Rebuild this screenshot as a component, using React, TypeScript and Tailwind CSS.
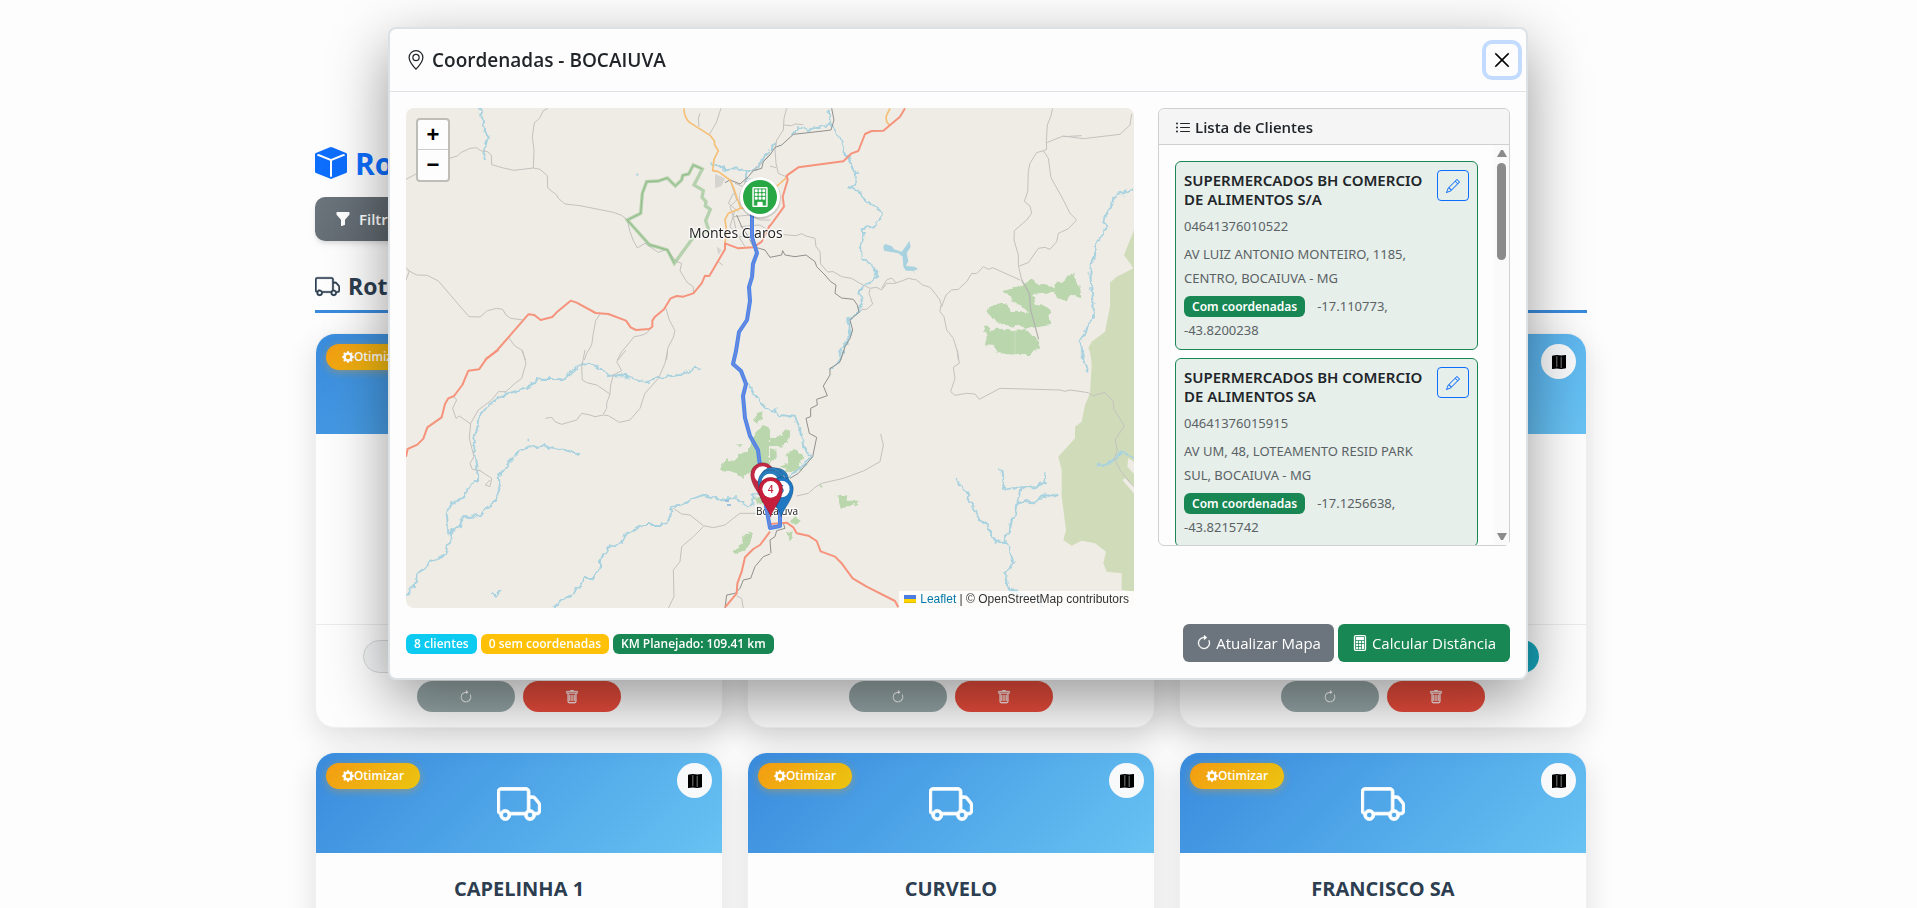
import type { ReactNode } from "react";
import {
  BsArrowClockwise,
  BsBoxFill,
  BsBuilding,
  BsCalculator,
  BsFunnelFill,
  BsGearFill,
  BsGeoAlt,
  BsListUl,
  BsMapFill,
  BsPencil,
  BsTrash,
  BsTruck,
  BsXLg,
} from "react-icons/bs";

const firstRow = ["ARAÇUAI", "BOCAIUVA", "BRASILIA DE MINAS"];
const secondRow = ["CAPELINHA 1", "CURVELO", "FRANCISCO SA"];

const clients = [
  {
    name: "SUPERMERCADOS BH COMERCIO DE ALIMENTOS S/A",
    doc: "04641376010522",
    address: "AV LUIZ ANTONIO MONTEIRO, 1185, CENTRO, BOCAIUVA - MG",
    coords: "-17.110773, -43.8200238",
  },
  {
    name: "SUPERMERCADOS BH COMERCIO DE ALIMENTOS SA",
    doc: "04641376015915",
    address: "AV UM, 48, LOTEAMENTO RESID PARK SUL, BOCAIUVA - MG",
    coords: "-17.1256638, -43.8215742",
  },
];

type Tile = {
  transform: string;
  roads: string;
  rails?: string;
  orange?: string;
  red: string;
  rivers: string;
  woods?: string;
  park?: string;
};

// each tile is drawn at 3x and scaled down into the map
const tiles: Tile[] = [
  {
    transform: "translate(-6 -8) scale(0.33333)",
    roads:
      "M18 238L48 222M148 175L172 168 182 158 210 145 230 143 242 152 262 155 274 165 275 194 310 204 342 211 400 204 402 150 397 110 403 68 418 56 430 32 443 25M400 204L420 208 442 227 443 264 470 285 475 295 495 312 540 317 595 328 640 337 665 346 682 360 690 395 700 422 712 444 735 430 775 457 800 448 828 484 845 490 840 512 862 548 880 560 880 578M18 540L28 513 18 503M22 510L50 525 82 526 115 543 207 650 240 651 262 632 290 625 308 628 318 645 332 655 370 660M325 712L345 738 365 750 377 780M600 643L587 662 580 700 575 735 560 760 553 780M798 625L808 660 825 692 820 712 803 745 800 780M748 690Q740 706 702 710L680 738 665 755 652 780M963 25L948 70 928 103M900 40L895 55 897 80M955 485L968 496M990 240L1010 300 990 320 1000 350 1050 345 1080 360 1110 360M1040 235L1030 260 1005 250M1000 350L1010 400 1035 440M1060 210L1085 190 1110 160M1005 330L990 380 1020 410 1050 410M1000 280L985 310 1015 335M1020 380L1080 375 1110 395",
    rails: "M975 248L990 240 1020 252 1045 230 1060 212 1085 205 1090 185 1110 165M1010 345L1025 380 1045 410 1060 440 1095 450 1110 472",
    orange:
      "M852 25Q852 55 870 68L930 106 943 122 944 135 955 152 942 178 938 212 955 215 990 240 1000 262 1022 325 985 340 975 358 980 395 975 430M1022 325L1060 320",
    red: "M1110 375L1085 425 1060 442 1015 445 975 430 975 448 928 528 915 527 905 550 880 580 850 590 830 588 812 595 792 628 765 650 757 662 757 680 748 687 708 690 692 682 678 662 625 642 587 639 530 608 512 602 470 637 457 651 422 660 403 645 385 643 340 695 292 750 255 780",
    rivers:
      "M240 25L245 50 250 68 252 92 265 107 258 135 250 160 255 180M925 190L955 196 975 208 1010 205 1040 212 1075 204 1085 180 1110 152M1040 212L1035 240 1050 245",
  },
  {
    transform: "translate(364 -8) scale(0.33333)",
    roads:
      "M50 25L42 55 40 90 20 120 15 150 18 190 25 220 48 230M0 198L18 203M40 75L65 77 75 72 100 74M40 404L78 407 95 401 108 408 135 415 138 440 150 455 152 492 173 516 190 515 215 530 245 535 270 550 300 565 320 562 335 570 350 550 375 550 395 543 415 535 440 540 458 555 480 562 495 580 510 600 515 620 528 585 545 570 565 568 590 545 605 520 620 521 640 500 655 508 668 503 750 540M300 568L297 580 308 612 290 628 275 628M335 565L350 540 365 534 378 548M512 618L510 635 522 650 530 690 550 715 562 755 565 780M848 25L842 50 832 75 829 125 830 148 820 152 800 158 780 190 775 215 773 275 763 304 780 318 785 340 770 360 733 392 732 420 745 465 745 495 755 540M820 152L835 175 843 233 880 300 900 340 920 360 895 386 865 400 860 425 840 448 825 442 805 445 775 488 748 498M830 128L880 108 940 116 1050 103 1080 75 1085 42M880 110L935 107",
    rails:
      "M185 25L192 60 183 90 160 93 70 103 35 135 15 142 0 165M0 472L35 465 38 452 45 465 75 470 108 465 135 485 140 500 165 525 182 545 198 555 195 580 215 594 250 598 262 615 267 637 240 660 248 690 240 715 225 740 212 780",
    orange: "M360 25L348 50 350 65 358 75M0 270L25 255 50 232",
    red: "M405 25L390 50 340 92 305 93 285 102 265 153 245 160 220 184 85 202 50 227 53 240 38 290 42 320 0 378",
    rivers:
      "M175 25L178 50 180 70 135 85 115 90 85 82 65 105M0 150L15 130M180 70L195 100 218 125 220 155 235 175 245 190 258 220 255 255 238 262 268 275 285 300 325 325 338 348 315 378 278 385 280 415 270 435 272 475 300 490 322 515 310 545 280 560 265 580 280 610 262 640 235 658 240 690 238 715 215 750 210 780M1090 265L1060 280 1045 280 1030 295 1025 320 1005 345 1000 370 1012 380 975 435 975 470 962 495 962 550 970 600 972 655 950 675 945 700 932 720 940 780",
    woods:
      "M700 574L765 552 785 535 800 550 850 562 855 545 880 545 910 518 918 550 930 560 936 592 905 588 890 600 865 600 853 575 790 582 797 615 825 617 848 630 835 650 842 675 770 686 740 672 715 680 670 657 652 642 655 625 690 607 712 618 725 632 778 635 740 610ZM642 675L658 682 655 695 685 684 705 695 740 688 765 690 798 712 808 748 785 762 680 760 672 738 645 735 650 710Z",
    park: "M1092 390L1062 465 1090 505 1040 530 1020 548 1020 620 1005 695 965 725 955 745 970 780 1092 780Z",
  },
  {
    transform: "translate(-6 242) scale(0.33333)",
    roads:
      "M367 0L378 40 365 85 345 100 318 125 295 125 275 150 235 180 212 220 208 265 222 320 210 340 217 358 240 362 275 385 270 410 256 405 270 390M160 138L170 150 158 175 168 205 178 198 212 222M555 0L545 50 547 90 560 98 590 105 630 132 620 160 620 175 610 192M678 0L650 35 665 62 640 75 632 105 630 132M803 0L795 40 775 85 735 130 720 175 690 210 658 217 625 197 610 195 585 200 570 195 545 190 530 210 485 223 465 215 455 202 436 205M820 475L845 492 870 495 910 527 940 533 975 525 1000 505 1020 490 1110 490M910 530L880 560 845 590 840 635 820 660 822 740 805 775M1010 738L1025 745 1030 775",
    rails: "M1110 612L1090 620 1065 650 1052 685 1030 690 1020 715 1005 730 980 735 975 775",
    red: "M295 0L260 25 237 58 205 62 187 105 162 138 145 145 135 162 125 202 82 232 70 266 52 284 23 297 18 320M1110 545L1080 585 1060 597 1035 622 1025 665 1012 700 1010 730 975 772",
    rivers:
      "M905 58L885 53 840 75 780 83 740 97 710 88 660 75 625 78 590 48 545 42 520 62 490 88 420 86 380 115 315 133 265 165 235 205 230 240 220 265 228 330 235 360 234 390 215 400 190 440 150 465 140 490 145 545 155 570 130 618 95 630 75 655 50 670 48 700 18 737M540 312L505 303 470 295 425 287 360 298 350 315 330 335 295 375 300 410 288 450 265 465 240 498 190 502 178 530 148 545M465 772L480 752 510 738 540 710 555 683 580 685 600 650 600 630 630 590 660 580 675 555 730 525 795 525 810 505 815 475 850 465 885 443 910 435 950 445 1010 445 1040 470 1060 460 1060 430 1085 430M275 728L290 742M290 735L306 717M380 265L386 270M1045 105L1060 125 1080 155 1110 180",
    woods:
      "M957 355L980 325 990 340 1020 310 1045 305 1060 265 1085 225 1110 235 1110 340 1060 360 1030 383 1010 372 965 362ZM1062 205L1085 182 1090 205 1070 218ZM1005 285L1028 282 1020 295ZM995 605L1020 590 1035 560 1050 543 1055 570 1030 605 1005 615ZM1060 450L1080 440 1110 455 1095 470Z",
  },
  {
    transform: "translate(364 242) scale(0.33333)",
    roads:
      "M562 0L568 40 550 52 555 85 542 125 555 136 590 130 615 132 628 148 690 115 870 120 885 124 900 120 955 128 968 138 1005 127 1030 155 1032 178 1063 228 1035 270 1042 300 1033 325 1050 360 1092 412M332 252L340 285 330 335 280 363 220 385 155 400 135 412 115 430 80 438",
    rails:
      "M222 0L210 35 190 50 180 55 180 75 160 108 172 137 140 148 142 165 122 175 122 200 108 205 118 250 140 262 128 320 85 370 60 385M40 520L45 535 20 542 15 560 0 570 3 610",
    red: "M0 522L50 518 70 532 80 550 115 557 140 573 152 604 195 620 215 640 248 685 290 710 375 753 385 772",
    rivers:
      "M222 0L205 40 175 58M0 180L20 182 30 195 75 200 90 235 100 290 125 320 90 355 55 385M935 0L945 40 953 65M688 352L698 365 702 417 730 415 755 412 800 412 810 402 825 400 830 365M755 412L748 450 738 470 735 490 725 505 720 540 705 560 708 580 675 575 650 525 628 510 590 430 555 382M745 453L785 460 830 432 845 440 868 434M708 580L720 605 732 638 708 665 710 690 718 720 745 722M720 722L790 745 825 772M980 343L998 348 1030 332 1055 308 1092 322",
    woods:
      "M0 265L35 260 35 245 60 242 60 265 35 290 0 285ZM0 295L20 300 20 335 0 340ZM52 310L80 300 105 325 85 350 95 362 60 365 25 350 55 340ZM202 437L235 435 233 452 262 452 260 465 215 472 205 460ZM680 0L805 0 770 10 710 10ZM60 515L75 495 90 512 80 525ZM50 545L65 550 60 572ZM150 402L158 402 156 412Z",
    park: "M960 0L965 45 960 130 945 165 935 215 915 230 915 265 865 320 875 360 875 440 888 540 880 570 905 587 935 572 975 580 1008 605 1000 640 1010 665 1055 670 1055 720 1092 725 1092 430 1058 390 1092 412 1092 0Z",
  },
];

const routePath =
  "M346 100L346 129 351 145 347 156 346 169 343 179 344 193 341 212 333 224 330 243 327 256 335 263 340 276 337 288 339 310 344 328 352 342 354 358M360 398L364 420 374 418 374 400";

function Pin({ x, y, color, label }: { x: number; y: number; color: string; label?: string }) {
  return (
    <g transform={`translate(${x} ${y})`}>
      <path
        d="M0 84C-5 60-36 32-36 0A36 36 0 1 1 36 0C36 32 5 60 0 84Z"
        fill={color}
        stroke="#000"
        strokeOpacity="0.25"
        strokeWidth="2"
      />
      <circle r="25" fill="#fff" />
      {label && (
        <text y="11" textAnchor="middle" fontSize="30" fontWeight="600" fill={color}>
          {label}
        </text>
      )}
    </g>
  );
}

function RouteMap() {
  return (
    <svg
      viewBox="0 0 728 500"
      preserveAspectRatio="xMidYMid slice"
      className="block h-full w-full bg-[#efece5] font-['Open_Sans','Noto_Sans',sans-serif]"
      role="img"
      aria-label="Mapa da rota"
    >
      <defs>
        <filter id="meander" filterUnits="userSpaceOnUse" x="0" y="0" width="1110" height="810">
          <feTurbulence type="fractalNoise" baseFrequency="0.05" numOctaves="2" seed="4" />
          <feDisplacementMap in="SourceGraphic" scale="20" xChannelSelector="R" yChannelSelector="G" />
        </filter>
      </defs>

      {tiles.map((tile) => (
        <g key={tile.transform} transform={tile.transform} fill="none" strokeLinejoin="round">
          {tile.park && <path d={tile.park} fill="#d0dcb9" />}
          {tile.woods && <path d={tile.woods} fill="#b9d6ad" filter="url(#meander)" />}
          <path d={tile.rivers} stroke="#a8d2df" strokeWidth="6" filter="url(#meander)" />
          <path d={tile.roads} stroke="#c2c1be" strokeWidth="3" />
          {tile.rails && <path d={tile.rails} stroke="#8f8f8d" strokeWidth="3" />}
          {tile.orange && <path d={tile.orange} stroke="#f5bf76" strokeWidth="5" />}
          <path d={tile.red} stroke="#f5937c" strokeWidth="6" />
        </g>
      ))}

      <g transform="translate(-6 -8) scale(0.33333)">
        <path d="M945 222L975 235 965 258 945 265ZM950 440L965 450 955 465Z" fill="#d5d4d1" />
        <path
          d="M682 360L722 340 727 280 740 245 775 243 802 234 826 258 845 240 848 226 866 222 880 195 907 207 882 255 910 272 906 292 918 305 916 318 931 328 917 362 926 390 878 415 823 490 802 450 748 434Z"
          fill="none"
          stroke="#8fc087"
          strokeOpacity="0.6"
          strokeWidth="10"
        />
        <path
          d="M682 360L722 340 727 280 740 245 775 243 802 234 826 258 845 240 848 226 866 222 880 195 907 207M682 360L748 434 802 450 823 490"
          fill="none"
          stroke="#8abb82"
          strokeWidth="3"
        />
        <path d="M706 224L716 220 714 228Z" fill="#a8d2df" />
      </g>
      <g transform="translate(364 -8) scale(0.33333)">
        <path
          d="M340 440L345 432 365 438 372 448 395 455 408 438 418 422 422 440 410 460 415 482 408 498 435 500 444 508 430 512 438 525 428 512 408 512 400 500 398 470 385 460 342 452Z"
          fill="#a8d2df"
        />
        <path d="M755 540L778 580 782 630 806 718" fill="none" stroke="#b3b5b0" strokeWidth="4" />
        <path d="M735 690L735 760" fill="none" stroke="#d6dfcb" strokeWidth="2" />
      </g>
      <g transform="translate(364 242) scale(0.33333)">
        <path d="M1075 325L1092 335 1092 372 1072 350ZM1058 390L1092 430 1092 412 1065 385Z" fill="#efece5" />
      </g>
      <path d="M319 393h4M321 397h4" stroke="#4a97dc" strokeWidth="1" />

      <g fill="#222" stroke="#fff" strokeWidth="3" strokeOpacity="0.7" paintOrder="stroke">
        <text x="283" y="130" fontSize="14">
          Montes Claros
        </text>
        <text x="350" y="407" fontSize="10">
          Bocaiúva
        </text>
      </g>

      <g fill="none" strokeLinejoin="round" strokeLinecap="round">
        <path d={routePath} stroke="#4484f0" strokeWidth="4" />
        <path d={routePath} stroke="#6a88da" strokeWidth="2" />
      </g>

      <circle cx="354" cy="90" r="21" fill="#000" fillOpacity="0.15" />
      <circle cx="354" cy="89" r="20" fill="#fff" />
      <circle cx="354" cy="89" r="17" fill="#28a745" />
      <BsBuilding x="344" y="79" size={20} color="#fff" strokeWidth="0.3" />

      <g transform="translate(314 332) scale(0.33333)">
        <Pin x={128} y={104} color="#c02a44" />
        <Pin x={170} y={120} color="#2a7dbd" />
        <Pin x={156} y={118} color="#2a7dbd" />
        <Pin x={150} y={126} color="#2a7dbd" />
        <Pin x={184} y={147} color="#1f78c1" label="5" />
        <Pin x={152} y={148} color="#c51f3b" label="4" />
      </g>
    </svg>
  );
}

function MapPanel() {
  return (
    <div className="relative col-span-2 h-[500px] overflow-hidden rounded-lg">
      <RouteMap />
      <div className="absolute top-2.5 left-2.5 flex w-[34px] flex-col rounded border-2 border-[#bfbdb8] bg-[#fdfdfd] font-['Liberation_Sans',Arial,sans-serif] text-[22px] font-bold text-black">
        <button type="button" aria-label="Aumentar zoom" className="h-[30px] border-b border-[#ccc] leading-[30px]">
          +
        </button>
        <button type="button" aria-label="Diminuir zoom" className="h-[30px] leading-[30px]">
          −
        </button>
      </div>
      <p className="absolute right-0 bottom-0 flex h-[17px] items-center bg-white/80 px-[5px] pb-px font-['Liberation_Sans',Arial,sans-serif] text-xs whitespace-pre text-[#333]">
        <svg className="mr-1 h-2 w-3" viewBox="0 0 12 8" aria-hidden="true">
          <path fill="#4C7BE1" d="M0 0h12v4H0z" />
          <path fill="#FFD500" d="M0 4h12v3H0z" />
          <path fill="#E0BC00" d="M0 7h12v1H0z" />
        </svg>
        <a href="#leaflet" className="text-[#0078a8]">
          Leaflet
        </a>
        {" | © OpenStreetMap contributors"}
      </p>
    </div>
  );
}

function ClientList() {
  return (
    <div className="self-start rounded-md border border-[#cfd0d1]">
      <h6 className="flex h-9 items-center gap-1 rounded-t-md border-b border-[#cfd0d1] bg-[#f5f5f5] px-4 pt-0.5 text-[15px] font-semibold text-[#212529]">
        <BsListUl className="h-4 w-4" />
        Lista de Clientes
      </h6>
      <div className="flex h-[400px] overflow-hidden">
        <div className="flex min-w-0 flex-1 flex-col gap-2 p-4">
          {clients.map((client) => (
            <article
              key={client.doc}
              className="flex h-[189px] shrink-0 items-start justify-between rounded-md border border-[#198754] bg-[#e6efea] p-2 font-['Noto_Sans','Open_Sans',sans-serif] text-[13px] leading-6 text-[#5b6266]"
            >
              <div className="min-w-0 flex-1">
                <h6 className="mt-px mb-[5px] text-[15px] leading-[19px] font-semibold text-[#212529]">{client.name}</h6>
                <p className="mb-1">{client.doc}</p>
                <p>{client.address}</p>
                <p className="pt-1">
                  <span className="mr-3 inline-block rounded-md bg-[#198754] px-2 text-xs leading-[21px] font-semibold text-white">
                    Com coordenadas
                  </span>
                  {client.coords}
                </p>
              </div>
              <button
                type="button"
                aria-label="Editar"
                className="flex h-[31px] w-8 shrink-0 items-center justify-center rounded border border-[#0d6efd] text-[#0d6efd]"
              >
                <BsPencil className="h-3.5 w-3.5" />
              </button>
            </article>
          ))}
        </div>
        <div className="flex w-[15px] flex-col items-center bg-[#fafafa] py-1">
          <svg viewBox="0 0 10 8" className="h-2 w-2.5" aria-hidden="true">
            <path d="M4 1h2l4 7H0z" fill="#8b8b8b" />
          </svg>
          <div className="mt-1.5 h-[97px] w-[9px] rounded-full bg-[#8b8b8b]" />
          <svg viewBox="0 0 10 8" className="mt-auto h-2 w-2.5" aria-hidden="true">
            <path d="M4 7h2l4-7H0z" fill="#8b8b8b" />
          </svg>
        </div>
      </div>
    </div>
  );
}

function RouteCard({ name, children }: { name: string; children?: ReactNode }) {
  return (
    <article className="flex h-[395px] flex-col overflow-hidden rounded-[20px] border border-black/5 bg-[#fdfdfd] shadow-[0_10px_30px_rgba(0,0,0,0.12)]">
      <div className="relative flex h-[100px] shrink-0 items-center justify-center bg-linear-135 from-[#398bdd] to-[#68c2f2] text-white">
        <button
          type="button"
          className="absolute top-2.5 left-2.5 flex h-[26px] w-[94px] items-center justify-center rounded-full bg-linear-135 from-[#f39c12] to-[#ebc40f] text-xs font-semibold shadow-[0_2px_8px_rgba(243,156,18,0.4)]"
        >
          <BsGearFill className="h-3 w-3" />
          Otimizar
        </button>
        <BsTruck className="mt-0.5 h-11 w-11" strokeWidth="0.3" />
        <button
          type="button"
          aria-label={`Mapa de ${name}`}
          className="absolute top-2.5 right-2.5 flex h-[35px] w-[35px] items-center justify-center rounded-full bg-[#f8f9fa] text-black"
        >
          <BsMapFill className="h-3.5 w-3.5" strokeWidth="0.5" />
        </button>
      </div>
      <h5 className="flex-1 pt-6 text-center text-xl leading-6 font-bold text-[#2c3e50]">{name}</h5>
      {children}
    </article>
  );
}

function CardActions() {
  return (
    <div className="border-t border-[#e9ecef] px-[47px] pt-[15px] pb-[15px]">
      <div className="flex h-[33px] gap-2">
        <button type="button" aria-label="Detalhes" className="flex-1 rounded-full border border-[#d5d8da] bg-[#f3f4f5]" />
        <button type="button" aria-label="Clientes" className="flex-1 rounded-full bg-[#3498db]" />
        <button type="button" aria-label="Coordenadas" className="flex-1 rounded-full bg-[#17a2b8]" />
      </div>
      <div className="mt-2 flex h-[31px] justify-center gap-2 text-white">
        <button
          type="button"
          aria-label="Atualizar"
          className="flex w-[98px] items-center justify-center rounded-full bg-[#95a5a6]"
        >
          <BsArrowClockwise className="h-3.5 w-3.5" />
        </button>
        <button
          type="button"
          aria-label="Excluir"
          className="flex w-[98px] items-center justify-center rounded-full bg-[#e74c3c]"
        >
          <BsTrash className="h-3.5 w-3.5" strokeWidth="0.3" />
        </button>
      </div>
    </div>
  );
}

function CoordinatesModal() {
  return (
    <div className="fixed inset-0 flex items-start justify-center pr-px">
      <section
        role="dialog"
        aria-labelledby="modal-title"
        className="mt-[27px] w-full max-w-[1140px] rounded-lg border-2 border-[#dce1e5] bg-[#fdfdfd] shadow-[0_20px_60px_rgba(0,0,0,0.4)]"
      >
        <header className="flex items-center justify-between border-b border-[#dee2e6] py-[15px] pr-2 pl-4">
          <h5 id="modal-title" className="flex items-center gap-1.5 text-[19px] leading-8 font-semibold text-[#212529]">
            <BsGeoAlt className="h-5 w-5" />
            Coordenadas - BOCAIUVA
          </h5>
          <button
            type="button"
            aria-label="Fechar"
            className="-my-1 flex h-8 w-8 items-center justify-center rounded-md text-black ring-4 ring-[#c2dbfe]"
          >
            <BsXLg className="h-[18px] w-[18px]" strokeWidth="0.6" />
          </button>
        </header>

        <div className="p-4">
          <div className="grid grid-cols-3 gap-6">
            <MapPanel />
            <ClientList />
          </div>

          <div className="mt-4 flex items-center justify-between">
            <div className="flex gap-1 pt-0.5 text-xs leading-5 font-semibold text-white">
              <span className="rounded-md bg-[#0dcaf0] px-2">8 clientes</span>
              <span className="rounded-md bg-[#ffc107] px-2">0 sem coordenadas</span>
              <span className="rounded-md bg-[#198754] px-2">KM Planejado: 109.41 km</span>
            </div>
            <div className="flex gap-1 text-[15px] text-white">
              <button type="button" className="flex h-[38px] items-center gap-1 rounded-md bg-[#6c757d] px-[13px]">
                <BsArrowClockwise className="h-4 w-4" strokeWidth="0.3" />
                Atualizar Mapa
              </button>
              <button type="button" className="flex h-[38px] items-center gap-1 rounded-md bg-[#198754] px-3.5">
                <BsCalculator className="h-4 w-4" strokeWidth="0.3" />
                Calcular Distância
              </button>
            </div>
          </div>
        </div>
      </section>
    </div>
  );
}

export default function App() {
  return (
    <div className="h-screen overflow-hidden bg-[#fdfdfd] pr-[15px] font-['Open_Sans','Noto_Sans',sans-serif]">
      <main className="mx-auto max-w-[1272px] pt-[143px]">
        <h1 className="flex h-10 items-center gap-2 text-[30px] font-bold text-[#0d6efd]">
          <BsBoxFill className="h-8 w-8" />
          Rotas
        </h1>
        <button
          type="button"
          className="mt-3.5 flex h-11 items-center gap-2 rounded-[10px] bg-linear-135 from-[#6c757d] to-[#5a6268] px-5 text-[15px] font-semibold text-white shadow-md"
        >
          <BsFunnelFill className="h-4 w-4" />
          Filtros
        </button>
        <h2 className="mt-6 mb-5 flex h-12 items-start gap-2 border-b-3 border-[#3a8bdd] pt-1 text-[23px] font-bold text-[#2c3e50]">
          <BsTruck className="mt-[5px] h-[25px] w-[25px]" strokeWidth="0.2" />
          Rotas
        </h2>
        <div className="grid grid-cols-3 gap-6">
          {firstRow.map((name) => (
            <RouteCard key={name} name={name}>
              <CardActions />
            </RouteCard>
          ))}
          {secondRow.map((name) => (
            <RouteCard key={name} name={name}>
              <CardActions />
            </RouteCard>
          ))}
        </div>
      </main>
      <CoordinatesModal />
    </div>
  );
}
